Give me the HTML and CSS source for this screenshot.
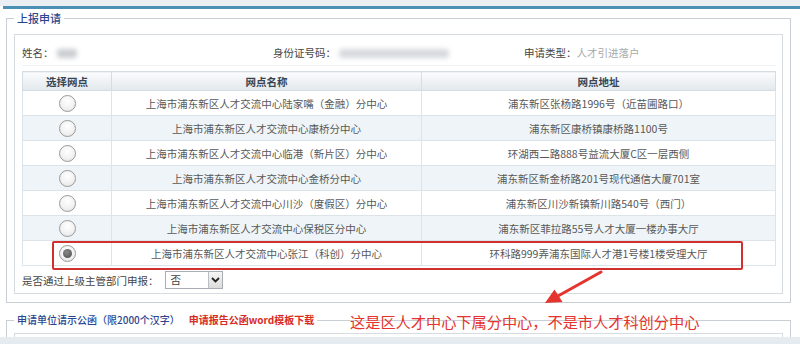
FILE: index.html
```html
<!DOCTYPE html>
<html lang="zh-CN">
<head>
<meta charset="utf-8">
<title>上报申请</title>
<link rel="stylesheet" href="styles.css">
</head>
<body>
<div class="page">
  <div class="top"></div>
  <div class="bar"></div>

  <fieldset class="fs fs1">
    <legend class="lg">上报申请</legend>
    <div class="inner">
      <div class="info">
        <div class="info-item"><span class="lbl">姓名：</span><span class="blur blur-name"></span></div>
        <div class="info-item"><span class="lbl">身份证号码：</span><span class="blur blur-id"></span></div>
        <div class="info-item"><span class="lbl">申请类型：</span><span class="val-muted">人才引进落户</span></div>
      </div>

      <table class="grid">
        <colgroup><col class="c1"><col class="c2"><col class="c3"></colgroup>
        <thead>
          <tr><th>选择网点</th><th>网点名称</th><th>网点地址</th></tr>
        </thead>
        <tbody>
          <tr><td><span class="radio"></span></td><td>上海市浦东新区人才交流中心陆家嘴（金融）分中心</td><td>浦东新区张杨路1996号（近苗圃路口）</td></tr>
          <tr class="alt"><td><span class="radio"></span></td><td>上海市浦东新区人才交流中心康桥分中心</td><td>浦东新区康桥镇康桥路1100号</td></tr>
          <tr><td><span class="radio"></span></td><td>上海市浦东新区人才交流中心临港（新片区）分中心</td><td>环湖西二路888号益流大厦C区一层西侧</td></tr>
          <tr class="alt"><td><span class="radio"></span></td><td>上海市浦东新区人才交流中心金桥分中心</td><td>浦东新区新金桥路201号现代通信大厦701室</td></tr>
          <tr><td><span class="radio"></span></td><td>上海市浦东新区人才交流中心川沙（度假区）分中心</td><td>浦东新区川沙新镇新川路540号（西门）</td></tr>
          <tr class="alt"><td><span class="radio"></span></td><td>上海市浦东新区人才交流中心保税区分中心</td><td>浦东新区菲拉路55号人才大厦一楼办事大厅</td></tr>
          <tr><td><span class="radio checked"></span></td><td>上海市浦东新区人才交流中心张江（科创）分中心</td><td>环科路999弄浦东国际人才港1号楼1楼受理大厅</td></tr>
        </tbody>
      </table>

      <div class="sel-row">
        <span class="lbl">是否通过上级主管部门申报：</span>
        <span class="select">
          <span class="sel-val">否</span>
          <span class="sel-btn">
            <svg width="9" height="6" viewBox="0 0 9 6"><path d="M1 1 L4.5 4.5 L8 1" fill="none" stroke="#222" stroke-width="1.8"/></svg>
          </span>
        </span>
      </div>
    </div>
  </fieldset>

  <fieldset class="fs fs2">
    <legend class="lg lg2">申请单位请示公函（限2000个汉字）<span class="dl">申请报告公函word模板下载</span></legend>
    <div class="inner inner2"></div>
  </fieldset>

  <div class="hl-box"></div>
  <svg class="arrow" width="70" height="45" viewBox="540 265 70 45">
    <line x1="601" y1="272" x2="558" y2="296" stroke="#e5332e" stroke-width="3" stroke-linecap="round"/>
    <polygon points="545,303 554.5,289.5 562.5,302" fill="#e5332e"/>
  </svg>
  <div class="annot">这是区人才中心下属分中心，不是市人才科创分中心</div>
</div>
<div class="bottom-strip"></div>
</body>
</html>
```

FILE: styles.css
```css
* { box-sizing: border-box; }
html, body { margin: 0; padding: 0; }
body {
  width: 800px;
  height: 344px;
  overflow: hidden;
  background: #ffffff;
  font-family: "Noto Sans CJK SC", "Noto Sans", sans-serif;
  font-size: 10.5px;
  color: #555;
}
.page {
  position: relative;
  height: 337px;
  overflow: hidden;
}
.top { height: 6px; background: #e9eef2; }
.bar { height: 3px; margin-left: 3px; background: #4c8fb4; }

.fs {
  margin: 2px 0 0 6px;
  width: 785px;
  border: 1px solid #c9cfd4;
  padding: 0 7px 8px 7px;
  min-width: 0;
}
.lg {
  padding: 0 3px;
  font-size: 11px;
  line-height: 14px;
  color: #2b4690;
  font-weight: 500;
}
.inner {
  margin-top: 9px;
  border: 1px solid #d7dce0;
  padding: 0 6px 3px 7px;
  background: #fff;
}
.info {
  display: grid;
  grid-template-columns: 251px 251px 251px;
  margin-top: 5px;
  height: 26px;
  line-height: 26px;
  border-bottom: 1px solid #f0f2f4;
  color: #444;
}
.info-item { display: flex; align-items: center; }
.blur {
  display: inline-block;
  height: 9px;
  background: #c9ccd0;
  filter: blur(2.5px);
  border-radius: 3px;
}
.blur-name { width: 20px; margin-left: 3px; }
.blur-id { width: 110px; margin-left: 3px; background: #d6d9dd; }
.val-muted { color: #a9a9a9; }

.grid {
  margin-top: 5px;
  width: 753px;
  border-collapse: collapse;
  table-layout: fixed;
  border: 1px solid #d5dde3;
}
.c1 { width: 89px; }
.c2 { width: 310px; }
.c3 { width: 354px; }
.grid th {
  height: 19px;
  padding: 0;
  font-weight: bold;
  color: #3a4450;
  background: linear-gradient(#fbfcfd, #e2e8ec);
  border: 1px solid #d5dde3;
  font-size: 10.5px;
}
.grid td {
  height: 25px;
  padding: 0;
  text-align: center;
  border: 1px solid #dde4e9;
  color: #585858;
}
.grid tr.alt td { background: #eef4f7; }
.radio {
  display: inline-block;
  width: 17px;
  height: 17px;
  border: 1px solid #9a9a9a;
  border-radius: 50%;
  background: radial-gradient(circle at 50% 35%, #ffffff 0%, #f2f2f2 55%, #dedede 100%);
  vertical-align: middle;
  position: relative;
}
.radio.checked::after {
  content: "";
  position: absolute;
  left: 3px;
  top: 3px;
  width: 9px;
  height: 9px;
  border-radius: 50%;
  background: radial-gradient(circle at 40% 35%, #8a8a8a, #4a4a4a);
}

.sel-row {
  margin-top: 4px;
  height: 20px;
  display: flex;
  align-items: center;
  color: #444;
}
.select {
  margin-left: 6px;
  width: 58px;
  height: 18px;
  border: 1px solid #a7adb3;
  display: flex;
  align-items: stretch;
  background: #fff;
}
.sel-val { flex: 1; padding-left: 5px; line-height: 16px; }
.sel-btn {
  width: 14px;
  border-left: 1px solid #b9bec3;
  background: linear-gradient(#f6f6f6, #dcdcdc);
  display: flex;
  align-items: center;
  justify-content: center;
}

.fs2 { margin-top: 10px; padding-bottom: 0; }
.lg2 { color: #2b4690; font-size: 10px; }
.dl { color: #d92b1f; font-weight: bold; margin-left: 9px; }
.inner2 { margin-top: 6px; height: 30px; }

.hl-box {
  position: absolute;
  left: 52px;
  top: 241px;
  width: 691px;
  height: 29px;
  border: 2px solid #d1312e;
  border-radius: 2px;
}
.arrow {
  position: absolute;
  left: 540px;
  top: 265px;
}
.annot {
  position: absolute;
  left: 350px;
  top: 312px;
  font-size: 15.2px;
  line-height: 18px;
  color: #e5332e;
  white-space: nowrap;
}
.bottom-strip { height: 7px; background: #e6ebef; }
```
